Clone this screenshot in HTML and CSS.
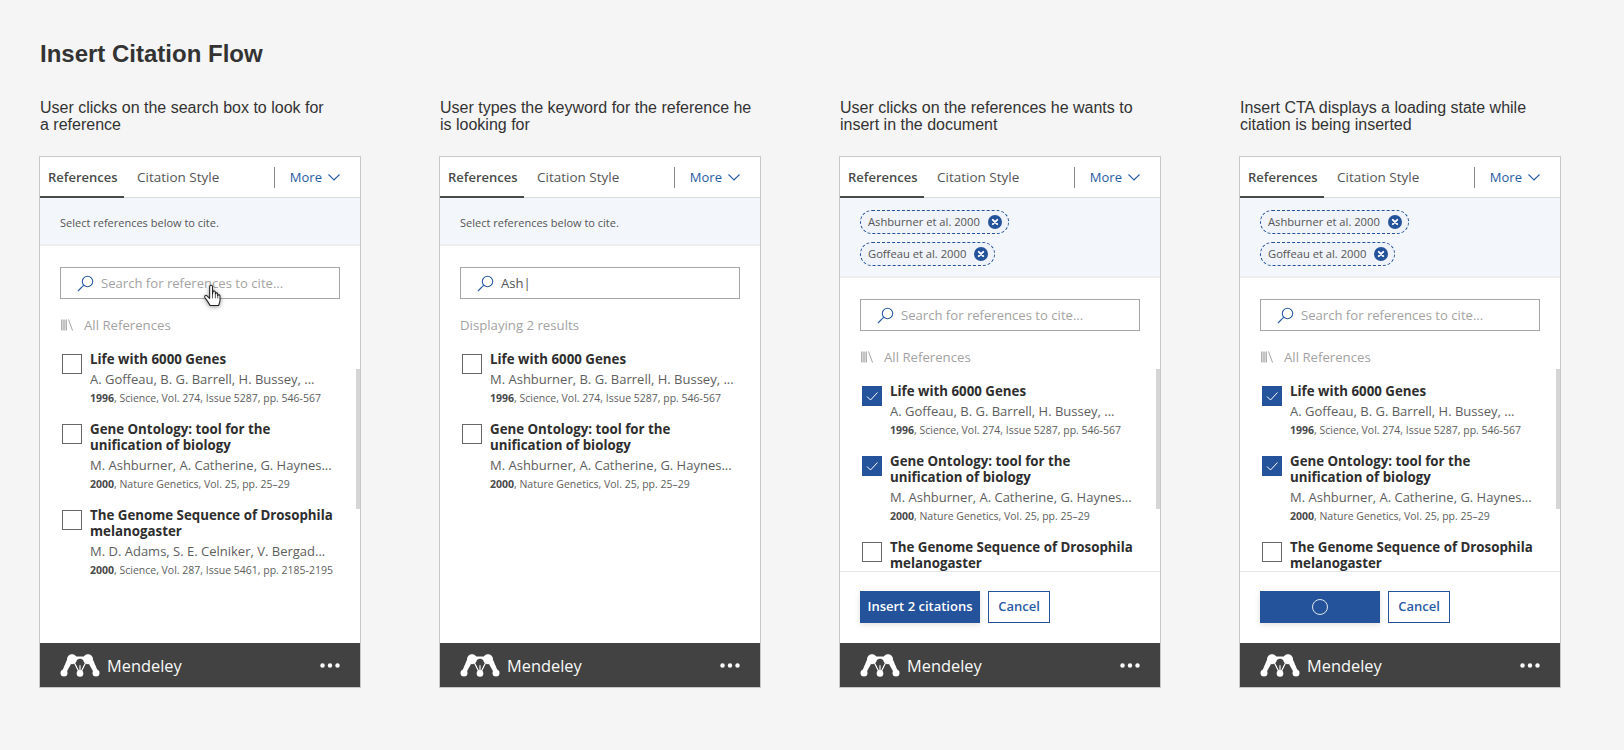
FILE: index.html
```html
<!DOCTYPE html>
<html lang="en">
<head>
<meta charset="utf-8">
<title>Insert Citation Flow</title>
<link rel="stylesheet" href="styles.css">
</head>
<body>
<svg class="defs" width="0" height="0" aria-hidden="true">
  <defs>
    <symbol id="search" viewBox="0 0 17 17"><circle cx="10.5" cy="6.5" r="5.2" fill="none" stroke="currentColor" stroke-width="1.1"/><path d="M6.8 10.2 1 16" fill="none" stroke="currentColor" stroke-width="1.2"/></symbol>
    <symbol id="lib" viewBox="0 0 12 12"><path d="M0.8 0.5v11M3 0.5v11M5.2 0.5v11" stroke="currentColor" stroke-width="1.3" fill="none"/><path d="M7.5 0.5 11.5 11.5" stroke="currentColor" stroke-width="1" fill="none"/></symbol>
    <symbol id="chev" viewBox="0 0 12 7"><path d="M0.5 0.5 6 6 11.5 0.5" fill="none" stroke="currentColor" stroke-width="1.1"/></symbol>
    <symbol id="tick" viewBox="0 0 20 20"><path d="M5 10.5 8.5 14 15.5 6.5" fill="none" stroke="#fff" stroke-width="1"/></symbol>
    <symbol id="close" viewBox="0 0 14 14"><circle cx="7" cy="7" r="7" fill="#24539b"/><path d="M4.8 4.8 9.2 9.2M9.2 4.8 4.8 9.2" stroke="#fff" stroke-width="1.9" stroke-linecap="round"/></symbol>
    <symbol id="logo" viewBox="0 0 40 23">
      <circle cx="12" cy="5.200" r="5" fill="#fff"/>
      <circle cx="28" cy="5.200" r="5" fill="#fff"/>
      <path d="M12 2.500H28V6H12Z" fill="#fff"/>
      <path d="M7.500 4.500 2 17.500 5.500 20 11 10Z M32.500 4.500 38 17.500 34.500 20 29 10Z" fill="#fff"/>
      <path d="M14.500 9 19 18M25.500 9 21 18M20 9v10" stroke="#fff" stroke-width="1.200" fill="none"/>
      <circle cx="4" cy="19" r="3.500" fill="#fff"/><circle cx="20" cy="19.500" r="3.300" fill="#fff"/><circle cx="36" cy="19" r="3.500" fill="#fff"/>
      <circle cx="20" cy="8" r="3.300" fill="#424242"/>
    </symbol>
    <symbol id="dots" viewBox="0 0 20 5"><circle cx="2.500" cy="2.500" r="2.200" fill="#fff"/><circle cx="10" cy="2.500" r="2.200" fill="#fff"/><circle cx="17.500" cy="2.500" r="2.200" fill="#fff"/></symbol>
  </defs>
</svg>

<h1 class="title">Insert Citation Flow</h1>

<main class="flow">

  <section class="step">
    <p class="caption">User clicks on the search box to look for<br>a reference</p>
    <div class="panel">
      <nav class="tabs"><span class="tab active">References</span><span class="tab">Citation Style</span><span class="more">More<svg class="chev"><use href="#chev"/></svg></span></nav>
      <div class="notice">Select references below to cite.</div>
      <div class="content">
        <div class="search"><svg class="search-icon"><use href="#search"/></svg><span class="placeholder">Search for references to cite...</span></div>
        <div class="section-label"><svg class="lib"><use href="#lib"/></svg>All References</div>
        <article class="item"><span class="check"></span><div class="info"><h3>Life with 6000 Genes</h3><p class="authors">A. Goffeau, B. G. Barrell, H. Bussey, ...</p><p class="meta"><b>1996</b>, Science, Vol. 274, Issue 5287, pp. 546-567</p></div></article>
        <article class="item"><span class="check"></span><div class="info"><h3>Gene Ontology: tool for the unification of biology</h3><p class="authors">M. Ashburner, A. Catherine, G. Haynes...</p><p class="meta"><b>2000</b>, Nature Genetics, Vol. 25, pp. 25–29</p></div></article>
        <article class="item"><span class="check"></span><div class="info"><h3>The Genome Sequence of Drosophila melanogaster</h3><p class="authors">M. D. Adams, S. E. Celniker, V. Bergad...</p><p class="meta"><b>2000</b>, Science, Vol. 287, Issue 5461, pp. 2185-2195</p></div></article>
      </div>
      <span class="scrollbar"></span>
      <svg class="cursor" viewBox="0 0 20 26" aria-hidden="true">
        <path d="M7 3.200c0-2 3-2 3 0V11l.5-2.500c.5-1.500 2.600-1 2.500.6v1.500c.4-1.400 2.500-1.100 2.500.5v1.300c.5-1.200 2.400-.9 2.400.7v4.400c0 2.500-1 3.500-1.500 5.500H7.500C6.500 21 4 17.500 2 14.500c-1-1.600.9-3 2.200-1.700L7 15.500Z" fill="#fff" stroke="#222" stroke-width="1.100" stroke-linejoin="round"/>
        <path d="M10 10v5.500M13 10.500v5M15.500 11.500v4" stroke="#222" stroke-width=".8" fill="none"/>
      </svg>
      <footer class="brand"><svg class="logo"><use href="#logo"/></svg><span class="brand-name">Mendeley</span><svg class="dots"><use href="#dots"/></svg></footer>
    </div>
  </section>

  <section class="step">
    <p class="caption">User types the keyword for the reference he<br>is looking for</p>
    <div class="panel">
      <nav class="tabs"><span class="tab active">References</span><span class="tab">Citation Style</span><span class="more">More<svg class="chev"><use href="#chev"/></svg></span></nav>
      <div class="notice">Select references below to cite.</div>
      <div class="content">
        <div class="search"><svg class="search-icon"><use href="#search"/></svg><span class="typed">Ash|</span></div>
        <div class="section-label">Displaying 2 results</div>
        <article class="item"><span class="check"></span><div class="info"><h3>Life with 6000 Genes</h3><p class="authors">M. Ashburner, B. G. Barrell, H. Bussey, ...</p><p class="meta"><b>1996</b>, Science, Vol. 274, Issue 5287, pp. 546-567</p></div></article>
        <article class="item"><span class="check"></span><div class="info"><h3>Gene Ontology: tool for the unification of biology</h3><p class="authors">M. Ashburner, A. Catherine, G. Haynes...</p><p class="meta"><b>2000</b>, Nature Genetics, Vol. 25, pp. 25–29</p></div></article>
      </div>
      <footer class="brand"><svg class="logo"><use href="#logo"/></svg><span class="brand-name">Mendeley</span><svg class="dots"><use href="#dots"/></svg></footer>
    </div>
  </section>

  <section class="step">
    <p class="caption">User clicks on the references he wants to<br>insert in the document</p>
    <div class="panel">
      <nav class="tabs"><span class="tab active">References</span><span class="tab">Citation Style</span><span class="more">More<svg class="chev"><use href="#chev"/></svg></span></nav>
      <div class="notice chips">
        <span class="chip">Ashburner et al. 2000<svg class="chip-x"><use href="#close"/></svg></span>
        <span class="chip">Goffeau et al. 2000<svg class="chip-x"><use href="#close"/></svg></span>
      </div>
      <div class="content">
        <div class="search"><svg class="search-icon"><use href="#search"/></svg><span class="placeholder">Search for references to cite...</span></div>
        <div class="section-label"><svg class="lib"><use href="#lib"/></svg>All References</div>
        <article class="item"><span class="check on"><svg class="tick"><use href="#tick"/></svg></span><div class="info"><h3>Life with 6000 Genes</h3><p class="authors">A. Goffeau, B. G. Barrell, H. Bussey, ...</p><p class="meta"><b>1996</b>, Science, Vol. 274, Issue 5287, pp. 546-567</p></div></article>
        <article class="item"><span class="check on"><svg class="tick"><use href="#tick"/></svg></span><div class="info"><h3>Gene Ontology: tool for the unification of biology</h3><p class="authors">M. Ashburner, A. Catherine, G. Haynes...</p><p class="meta"><b>2000</b>, Nature Genetics, Vol. 25, pp. 25–29</p></div></article>
        <article class="item"><span class="check"></span><div class="info"><h3>The Genome Sequence of Drosophila melanogaster</h3><p class="authors">M. D. Adams, S. E. Celniker, V. Bergad...</p><p class="meta"><b>2000</b>, Science, Vol. 287, Issue 5461, pp. 2185-2195</p></div></article>
      </div>
      <span class="scrollbar"></span>
      <div class="actions"><button class="btn primary">Insert 2 citations</button><button class="btn ghost">Cancel</button></div>
      <footer class="brand"><svg class="logo"><use href="#logo"/></svg><span class="brand-name">Mendeley</span><svg class="dots"><use href="#dots"/></svg></footer>
    </div>
  </section>

  <section class="step">
    <p class="caption">Insert CTA displays a loading state while<br>citation is being inserted</p>
    <div class="panel">
      <nav class="tabs"><span class="tab active">References</span><span class="tab">Citation Style</span><span class="more">More<svg class="chev"><use href="#chev"/></svg></span></nav>
      <div class="notice chips">
        <span class="chip">Ashburner et al. 2000<svg class="chip-x"><use href="#close"/></svg></span>
        <span class="chip">Goffeau et al. 2000<svg class="chip-x"><use href="#close"/></svg></span>
      </div>
      <div class="content">
        <div class="search"><svg class="search-icon"><use href="#search"/></svg><span class="placeholder">Search for references to cite...</span></div>
        <div class="section-label"><svg class="lib"><use href="#lib"/></svg>All References</div>
        <article class="item"><span class="check on"><svg class="tick"><use href="#tick"/></svg></span><div class="info"><h3>Life with 6000 Genes</h3><p class="authors">A. Goffeau, B. G. Barrell, H. Bussey, ...</p><p class="meta"><b>1996</b>, Science, Vol. 274, Issue 5287, pp. 546-567</p></div></article>
        <article class="item"><span class="check on"><svg class="tick"><use href="#tick"/></svg></span><div class="info"><h3>Gene Ontology: tool for the unification of biology</h3><p class="authors">M. Ashburner, A. Catherine, G. Haynes...</p><p class="meta"><b>2000</b>, Nature Genetics, Vol. 25, pp. 25–29</p></div></article>
        <article class="item"><span class="check"></span><div class="info"><h3>The Genome Sequence of Drosophila melanogaster</h3><p class="authors">M. D. Adams, S. E. Celniker, V. Bergad...</p><p class="meta"><b>2000</b>, Science, Vol. 287, Issue 5461, pp. 2185-2195</p></div></article>
      </div>
      <span class="scrollbar"></span>
      <div class="actions"><button class="btn primary loading"><span class="spinner"></span></button><button class="btn ghost">Cancel</button></div>
      <footer class="brand"><svg class="logo"><use href="#logo"/></svg><span class="brand-name">Mendeley</span><svg class="dots"><use href="#dots"/></svg></footer>
    </div>
  </section>

</main>
</body>
</html>
```

FILE: styles.css
```css
* { box-sizing: border-box; }

html, body { height: 100%; }

body {
  margin: 0;
  padding: 40px 0 0 40px;
  background: #f5f5f5;
  color: #333;
  font-family: "Open Sans", "Noto Sans", sans-serif;
  overflow: hidden;
}

.defs { display: block; height: 0; }

.title {
  margin: 0;
  font: bold 24px/28px "Liberation Sans", Arial, sans-serif;
  color: #333;
}

.flow {
  display: grid;
  grid-template-columns: repeat(4, 322px);
  column-gap: 78px;
  margin: 31px 0 0 -1px;
}

.caption {
  margin: 0 0 21px 1px;
  height: 36px;
  font: 16px/17px "Liberation Sans", Arial, sans-serif;
  color: #333;
}

.panel {
  position: relative;
  display: flex;
  flex-direction: column;
  height: 532px;
  background: #fff;
  border: 1px solid #c8c8c8;
}

.tabs {
  display: flex;
  align-items: center;
  flex: none;
  height: 41px;
  border-bottom: 1px solid #dcdcdc;
  font-size: 13.500px;
}

.tab {
  display: flex;
  align-items: center;
  height: 41px;
  padding: 0 8px;
  color: #555;
  white-space: nowrap;
}

.tab.active {
  width: 84px;
  padding-top: 2px;
  font-size: 13px;
  font-weight: 600;
  color: #4a4a4a;
  border-bottom: 2px solid #4a4a4a;
}

.tab + .tab { margin-left: 5px; }

.more {
  display: flex;
  align-items: center;
  height: 21px;
  margin-left: auto;
  margin-right: 20px;
  padding-left: 15px;
  border-left: 1px solid #8a8a8a;
  font-size: 13px;
  color: #2a5ba5;
}

.chev { width: 12px; height: 7px; margin-left: 6px; margin-top: 1px; }

.notice {
  flex: none;
  height: 48px;
  padding: 2px 20px 0;
  display: flex;
  align-items: center;
  background: #f3f7fc;
  border-bottom: 2px solid #eeeeee;
  font-size: 11px;
  color: #555;
}

.notice.chips {
  height: 80px;
  flex-direction: column;
  align-items: flex-start;
  justify-content: flex-start;
  gap: 8px;
  padding: 12px 20px 0;
}

.chip {
  display: flex;
  align-items: center;
  height: 24px;
  padding: 0 6px 2px 7px;
  border: 1px dashed #24539b;
  border-radius: 12px;
  background: #f0f3fa;
  font-size: 11.200px;
  color: #555;
  white-space: nowrap;
}

.chip-x { width: 14px; height: 14px; margin: 2px 0 0 8px; }

.content {
  flex: 1;
  min-height: 0;
  overflow: hidden;
  padding: 21px 20px 0;
}

.search {
  display: flex;
  align-items: center;
  height: 32px;
  padding-left: 16px;
  border: 1px solid #a6a6a6;
  background: #fff;
  font-size: 13.100px;
}

.search-icon { width: 17px; height: 17px; margin-right: 7px; color: #2a5ba5; }

.placeholder { color: #a3a3a3; }

.typed { color: #555; }

.section-label {
  display: flex;
  align-items: center;
  height: 20px;
  margin: 16px 0 16px;
  font-size: 13.200px;
  color: #a3a3a3;
}

.lib { width: 12px; height: 12px; margin: 0 11px 0 1px; color: #a3a3a3; }

.item {
  display: flex;
  gap: 8px;
  margin: 0 0 14px 2px;
}

.check {
  flex: none;
  width: 20px;
  height: 20px;
  margin-top: 3px;
  border: 1px solid #666;
  background: #fff;
}

.check.on { background: #24539b; border-color: #24539b; }

.tick { display: block; width: 20px; height: 20px; margin: -1px; }

.info { min-width: 0; }

.info h3 {
  margin: 0 0 2px;
  font-size: 13.300px;
  line-height: 16px;
  font-weight: 700;
  color: #2e2e2e;
}

.authors {
  margin: 0;
  font-size: 13px;
  line-height: 20px;
  color: #5e5e5e;
  white-space: nowrap;
}

.meta {
  margin: 0;
  font-size: 10.500px;
  line-height: 18px;
  color: #5e5e5e;
  white-space: nowrap;
}

.meta b { font-weight: 700; color: #4a4a4a; }

.scrollbar {
  position: absolute;
  top: 212px;
  right: 0;
  width: 4px;
  height: 140px;
  background: #d6d6d6;
}

.actions {
  flex: none;
  display: flex;
  gap: 8px;
  height: 72px;
  padding: 19px 20px 0;
  border-top: 1px solid #e6e6e6;
  background: #fff;
}

.btn {
  height: 32px;
  padding: 0 0 2px;
  font-family: inherit;
  font-size: 13px;
  font-weight: 600;
  border: 1px solid #24539b;
  background: #fff;
  color: #2a5ba5;
}

.btn.primary {
  width: 120px;
  background: #24539b;
  color: #fff;
  box-shadow: 0 2px 6px rgba(0, 0, 0, 0.12);
}

.btn.ghost { width: 62px; }

.btn.loading {
  display: flex;
  align-items: center;
  justify-content: center;
  padding: 0;
}

.spinner {
  width: 16px;
  height: 16px;
  border: 1px solid #dfe7f3;
  border-radius: 50%;
}

.cursor {
  position: absolute;
  left: 163px;
  top: 126px;
  width: 19px;
  height: 26px;
  filter: drop-shadow(0 1px 2px rgba(0, 0, 0, 0.4));
}

.brand {
  flex: none;
  display: flex;
  align-items: center;
  height: 44px;
  padding: 0 20px;
  background: #424242;
  color: #fff;
}

.logo { width: 40px; height: 23px; margin-right: 7px; }

.brand-name { font-size: 16.400px; color: #f8f8f8; }

.dots { width: 20px; height: 5px; margin-left: auto; }
```
